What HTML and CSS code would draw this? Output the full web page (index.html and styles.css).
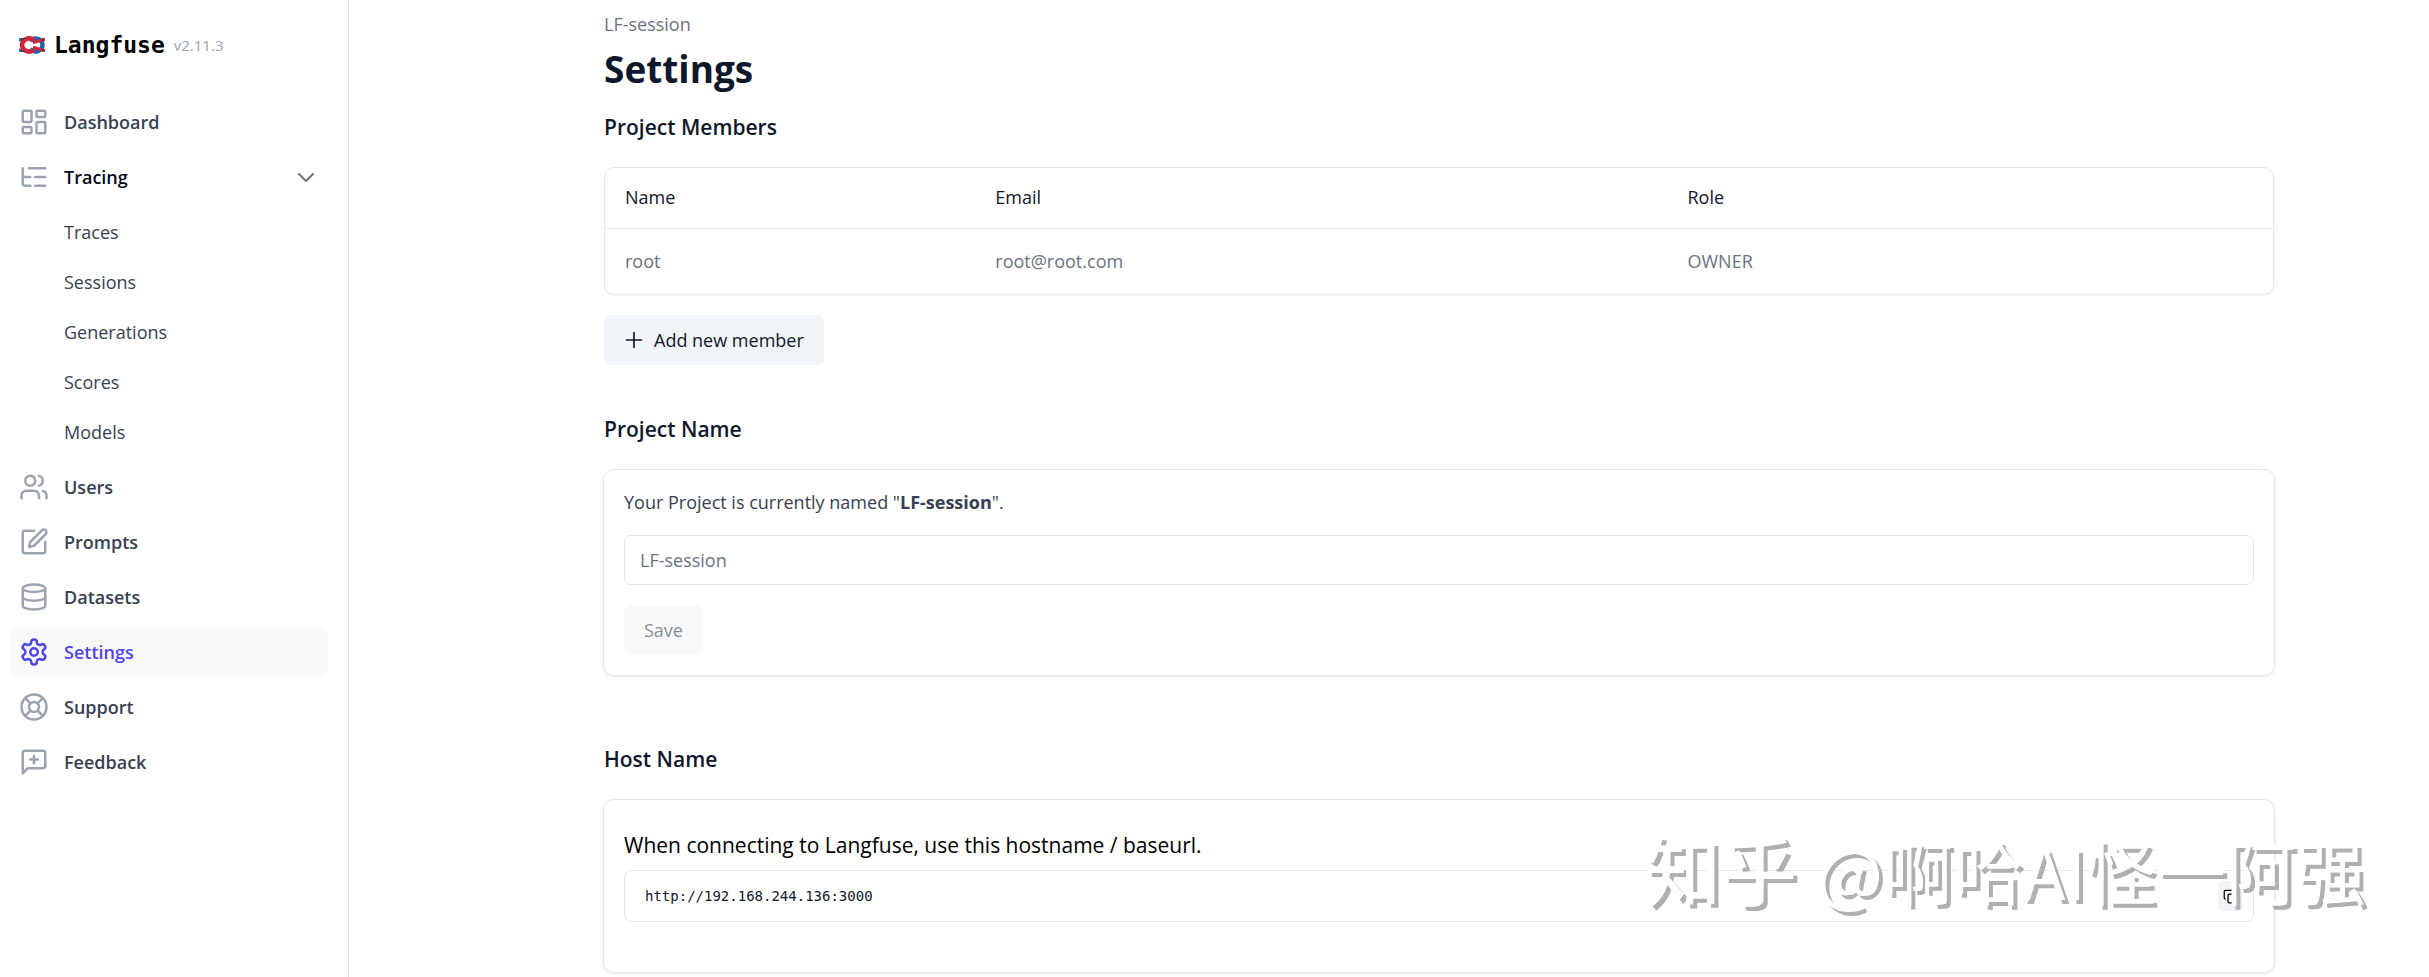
FILE: index.html
```html
<!DOCTYPE html>
<html lang="en">
<head>
  <meta charset="UTF-8" />
  <meta name="viewport" content="width=device-width, initial-scale=1.0" />
  <title>Settings | Langfuse</title>
  <link rel="stylesheet" href="styles.css">
</head>
<body>
  <aside class="sidebar">
    <a class="brand" href="#">
      <svg class="logo" viewBox="0 0 26 18" aria-hidden="true">
        <path d="M0 3.500c3 1 4 .5 6-.5M0 14.500c3-1 4-.5 6 .5" stroke="#2b5f9e" stroke-width="3.500"/>
        <path d="M11 5c2-2 5-3 8-2 3 1 4.500 3.500 4.500 6s-1.500 5-4.500 6c-3 1-6 0-8-2" stroke="#2562a6" stroke-width="4.500"/>
        <path d="M15 4C12 2 9 2 6.500 3.500S3 7 3 9s1 4 3.500 5.500S12 16 15 14" stroke="#d0253a" stroke-width="4.500"/>
        <path d="M14 6.500c4 0 7-3 12-3M14 11.500c4 0 7 3 12 3" stroke="#d0253a" stroke-width="3"/>
        <path d="M2 2.500c2 .5 3 .5 4-.5M2 15.500c2-.5 3-.5 4 .5M24 2v3M24 13v3" stroke="#30304a" stroke-width="1"/>
        <path d="M7 9l4-1h7v2h-7z" fill="#fff" stroke="none"/>
      </svg>
      <span class="brand-name">Langfuse</span>
      <span class="version">v2.11.3</span>
    </a>

    <nav class="nav">
      <a class="nav-item" href="#">
        <svg class="icon" viewBox="0 0 24 24"><rect width="7" height="9" x="3" y="3" rx="1"/><rect width="7" height="5" x="14" y="3" rx="1"/><rect width="7" height="9" x="14" y="12" rx="1"/><rect width="7" height="5" x="3" y="16" rx="1"/></svg>
        Dashboard
      </a>
      <button class="nav-item open" type="button" aria-expanded="true">
        <svg class="icon" viewBox="0 0 24 24"><path d="M21 12h-8"/><path d="M21 5H8"/><path d="M21 19h-8"/><path d="M3 5v5c0 1.100.9 2 2 2h4"/><path d="M3 10v7c0 1.100.9 2 2 2h4"/></svg>
        Tracing
        <svg class="chevron" viewBox="0 0 24 24"><path d="m5 9 7 7 7-7"/></svg>
      </button>
      <div class="subnav">
        <a href="#">Traces</a>
        <a href="#">Sessions</a>
        <a href="#">Generations</a>
        <a href="#">Scores</a>
        <a href="#">Models</a>
      </div>
      <a class="nav-item" href="#">
        <svg class="icon" viewBox="0 0 24 24"><path d="M16 21v-2a4 4 0 0 0-4-4H6a4 4 0 0 0-4 4v2"/><circle cx="9" cy="7" r="4"/><path d="M22 21v-2a4 4 0 0 0-3-3.870"/><path d="M16 3.130a4 4 0 0 1 0 7.750"/></svg>
        Users
      </a>
      <a class="nav-item" href="#">
        <svg class="icon" viewBox="0 0 24 24"><path d="M12 3H5a2 2 0 0 0-2 2v14a2 2 0 0 0 2 2h14a2 2 0 0 0 2-2v-7"/><path d="M18.375 2.625a2.121 2.121 0 1 1 3 3L12 15l-4 1 1-4Z"/></svg>
        Prompts
      </a>
      <a class="nav-item" href="#">
        <svg class="icon" viewBox="0 0 24 24"><ellipse cx="12" cy="5" rx="9" ry="3"/><path d="M3 5v14a9 3 0 0 0 18 0V5"/><path d="M3 12a9 3 0 0 0 18 0"/></svg>
        Datasets
      </a>
      <a class="nav-item active" href="#" aria-current="page">
        <svg class="icon" viewBox="0 0 24 24"><path d="M12.220 2h-.44a2 2 0 0 0-2 2v.18a2 2 0 0 1-1 1.730l-.43.25a2 2 0 0 1-2 0l-.15-.08a2 2 0 0 0-2.730.73l-.22.38a2 2 0 0 0 .73 2.730l.15.1a2 2 0 0 1 1 1.720v.51a2 2 0 0 1-1 1.740l-.15.09a2 2 0 0 0-.73 2.730l.22.38a2 2 0 0 0 2.730.73l.15-.08a2 2 0 0 1 2 0l.43.25a2 2 0 0 1 1 1.730V20a2 2 0 0 0 2 2h.44a2 2 0 0 0 2-2v-.18a2 2 0 0 1 1-1.730l.43-.25a2 2 0 0 1 2 0l.15.08a2 2 0 0 0 2.730-.73l.22-.39a2 2 0 0 0-.73-2.730l-.15-.08a2 2 0 0 1-1-1.740v-.5a2 2 0 0 1 1-1.740l.15-.09a2 2 0 0 0 .73-2.730l-.22-.38a2 2 0 0 0-2.730-.73l-.15.08a2 2 0 0 1-2 0l-.43-.25a2 2 0 0 1-1-1.730V4a2 2 0 0 0-2-2z"/><circle cx="12" cy="12" r="3"/></svg>
        Settings
      </a>
      <a class="nav-item" href="#">
        <svg class="icon" viewBox="0 0 24 24"><circle cx="12" cy="12" r="10"/><path d="m4.930 4.930 4.240 4.240"/><path d="m14.830 9.170 4.240-4.240"/><path d="m14.830 14.830 4.240 4.240"/><path d="m9.170 14.830-4.240 4.240"/><circle cx="12" cy="12" r="4"/></svg>
        Support
      </a>
      <a class="nav-item" href="#">
        <svg class="icon" viewBox="0 0 24 24"><path d="M21 15a2 2 0 0 1-2 2H7l-4 4V5a2 2 0 0 1 2-2h14a2 2 0 0 1 2 2z"/><path d="M12 7v6"/><path d="M9 10h6"/></svg>
        Feedback
      </a>
    </nav>
  </aside>

  <main class="main">
    <div class="container">
      <header class="page-header">
        <a class="crumb" href="#">LF-session</a>
        <h1>Settings</h1>
      </header>

      <section class="section section-members">
        <h2>Project Members</h2>
        <div class="table-card">
          <table class="members">
            <thead>
              <tr><th class="col-name">Name</th><th class="col-email">Email</th><th>Role</th></tr>
            </thead>
            <tbody>
              <tr><td>root</td><td>root@root.com</td><td>OWNER</td></tr>
            </tbody>
          </table>
        </div>
        <button class="btn btn-add" type="button">
          <svg class="plus" viewBox="0 0 24 24"><path d="M3 12h18M12 3v18"/></svg>
          Add new member
        </button>
      </section>

      <section class="section">
        <h2>Project Name</h2>
        <form class="card">
          <label class="card-label" for="project-name">Your Project is currently named "<b>LF-session</b>".</label>
          <input class="input" id="project-name" type="text" placeholder="LF-session">
          <button class="btn btn-save" type="submit" disabled>Save</button>
        </form>
      </section>

      <section class="section">
        <h2>Host Name</h2>
        <div class="card card-host">
          <p class="host-text">When connecting to Langfuse, use this hostname / baseurl.</p>
          <div class="code-box">
            <code>http://192.168.244.136:3000</code>
            <button class="copy" type="button" aria-label="Copy">
              <svg viewBox="0 0 24 24"><rect width="14" height="14" x="8" y="8" rx="2"/><path d="M4 16c-1.100 0-2-.9-2-2V4c0-1.100.9-2 2-2h10c1.100 0 2 .9 2 2"/></svg>
            </button>
          </div>
        </div>
      </section>
    </div>
  </main>

  <div class="watermark"><span class="watermark-site">知乎</span> @啊哈AI怪一阿强</div>
</body>
</html>
```

FILE: styles.css
```css
* {
  box-sizing: border-box;
}
body {
  margin: 0;
  min-height: 100vh;
  display: flex;
  background: #fff;
  color: #0f172a;
  font-family: "Open Sans", "Noto Sans", sans-serif;
  font-size: 18px;
  line-height: 25px;
}
a {
  color: inherit;
  text-decoration: none;
}
button, input {
  font: inherit;
}
svg {
  fill: none;
  stroke: currentColor;
  stroke-width: 2;
  stroke-linecap: round;
  stroke-linejoin: round;
}

/* sidebar */
.sidebar {
  flex: 0 0 349px;
  padding: 20px 20px 20px 9px;
  border-right: 1px solid #e2e4e9;
}
.brand {
  display: flex;
  align-items: center;
  height: 50px;
  padding-left: 10px;
  margin-bottom: 27px;
}
.logo {
  width: 26px;
  height: 18px;
  margin-right: 9px;
  stroke-linecap: butt;
}
.brand-name {
  font-family: "DejaVu Sans Mono", monospace;
  font-size: 23px;
  font-weight: 700;
  color: #000;
}
.version {
  margin-left: 9px;
  font-size: 15px;
  color: #9ca3af;
}
.nav {
  display: flex;
  flex-direction: column;
  gap: 5px;
}
.nav-item {
  display: flex;
  align-items: center;
  gap: 15px;
  height: 50px;
  padding: 0 10px;
  border: none;
  border-radius: 8px;
  background: none;
  color: #374151;
  font-weight: 600;
  text-align: left;
}
.nav-item.open {
  color: #020817;
}
.nav-item.active {
  background: #f9fafb;
  color: #4f46e5;
}
.icon {
  width: 30px;
  height: 30px;
  color: #9ca3af;
}
.active .icon {
  color: #4f46e5;
}
.chevron {
  width: 24px;
  height: 24px;
  margin-left: auto;
  color: #6b7280;
}
.subnav {
  display: flex;
  flex-direction: column;
}
.subnav a {
  height: 50px;
  line-height: 50px;
  padding-left: 55px;
  color: #374151;
}

/* content */
.main {
  flex: 1;
  padding-left: 100px;
}
.container {
  max-width: 1750px;
  margin: 0 auto;
  padding: 12px 40px 0;
}
.crumb {
  display: block;
  color: #6b7280;
}
h1 {
  margin: 7px 0 0;
  font-size: 37px;
  line-height: 50px;
  font-weight: 700;
}
h2 {
  margin: 0 0 23px;
  font-size: 21px;
  line-height: 34px;
  font-weight: 600;
}
.page-header {
  margin-bottom: 16px;
}
.section {
  margin-bottom: 66px;
}
.section:last-child {
  margin-bottom: 0;
}
.section-members {
  margin-bottom: 47px;
}
.table-card {
  margin-bottom: 20px;
  border: 1px solid #e5e7eb;
  border-radius: 10px;
  box-shadow: 0 1px 2px rgba(0, 0, 0, 0.06);
}
.members {
  width: 100%;
  table-layout: fixed;
  border-collapse: collapse;
}
.members th, .members td {
  padding: 0 20px;
  text-align: left;
  font-weight: 400;
}
.members th {
  height: 60px;
  border-bottom: 1px solid #e5e7eb;
}
.members td {
  height: 66px;
  color: #6b7280;
}
.col-name { width: 22.200%; }
.col-email { width: 41.500%; }

.btn {
  display: flex;
  align-items: center;
  height: 50px;
  padding: 0 20px;
  border: none;
  border-radius: 7px;
  background: #f1f5f9;
  color: #0f172a;
}
.plus {
  width: 20px;
  height: 20px;
  margin-right: 10px;
}
.btn-save:disabled {
  opacity: 0.5;
}
.card {
  display: flex;
  flex-direction: column;
  align-items: flex-start;
  margin: 0 -1px;
  padding: 20px;
  border: 1px solid #e5e7eb;
  border-radius: 11px;
  box-shadow: 0 1px 3px rgba(0, 0, 0, 0.1);
}
.card-label {
  margin-bottom: 20px;
  color: #374151;
}
.input {
  width: 100%;
  height: 50px;
  margin-bottom: 20px;
  padding: 0 15px;
  border: 1px solid #e5e7eb;
  border-radius: 7px;
  background: #fff;
}
.input::placeholder {
  color: #6b7280;
}
.card-host {
  padding: 30px 20px 50px;
}
.host-text {
  margin: 0 0 10px;
  font-size: 21px;
  line-height: 30px;
  color: #000;
}
.code-box {
  display: flex;
  align-items: center;
  justify-content: space-between;
  width: 100%;
  height: 52px;
  padding: 0 10px 0 20px;
  border: 1px solid #e5e7eb;
  border-radius: 7px;
}
.code-box code {
  font-family: "DejaVu Sans Mono", monospace;
  font-size: 14px;
}
.copy {
  display: flex;
  align-items: center;
  justify-content: center;
  width: 25px;
  height: 30px;
  padding: 0;
  border: none;
  border-radius: 5px;
  background: #f1f5f9;
}
.copy svg {
  width: 15px;
  height: 15px;
}

.watermark {
  position: fixed;
  right: 63px;
  bottom: 59px;
  font-family: "Noto Sans CJK SC", sans-serif;
  font-size: 70px;
  line-height: 96px;
  color: #fff;
  text-shadow: 4px 4px 0 #b0b0b0;
  pointer-events: none;
}
.watermark-site {
  margin-right: 4px;
  font-size: 76px;
  font-weight: 500;
}
```
